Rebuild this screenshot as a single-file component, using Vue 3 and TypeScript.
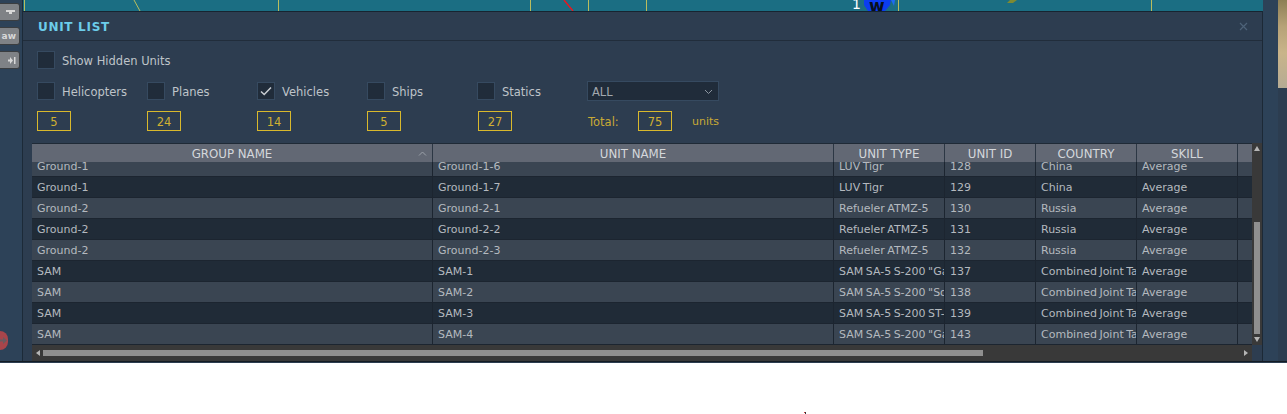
<script setup lang="ts">
interface Filter { label: string; count: number; checked: boolean }
const filters: Filter[] = [
  { label: 'Helicopters', count: 5, checked: false },
  { label: 'Planes', count: 24, checked: false },
  { label: 'Vehicles', count: 14, checked: true },
  { label: 'Ships', count: 5, checked: false },
  { label: 'Statics', count: 27, checked: false },
]
const columns = ['GROUP NAME', 'UNIT NAME', 'UNIT TYPE', 'UNIT ID', 'COUNTRY', 'SKILL']
const rows: string[][] = [
  ['Ground-1', 'Ground-1-6', 'LUV Tigr', '128', 'China', 'Average'],
  ['Ground-1', 'Ground-1-7', 'LUV Tigr', '129', 'China', 'Average'],
  ['Ground-2', 'Ground-2-1', 'Refueler ATMZ-5', '130', 'Russia', 'Average'],
  ['Ground-2', 'Ground-2-2', 'Refueler ATMZ-5', '131', 'Russia', 'Average'],
  ['Ground-2', 'Ground-2-3', 'Refueler ATMZ-5', '132', 'Russia', 'Average'],
  ['SAM', 'SAM-1', 'SAM SA-5 S-200 "Gammon"', '137', 'Combined Joint Task Forces', 'Average'],
  ['SAM', 'SAM-2', 'SAM SA-5 S-200 "Square Pair"', '138', 'Combined Joint Task Forces', 'Average'],
  ['SAM', 'SAM-3', 'SAM SA-5 S-200 ST-68', '139', 'Combined Joint Task Forces', 'Average'],
  ['SAM', 'SAM-4', 'SAM SA-5 S-200 "Gammon"', '143', 'Combined Joint Task Forces', 'Average'],
]
</script>

<template>
  <div class="screen">
    <div class="app">
      <aside class="rail">
        <div class="railbtn">
          <svg width="10" height="6" viewBox="0 0 10 6"><path d="M0 1h9v2H6v2H3V3H0z" fill="#d8d8d8" /></svg>
        </div>
        <div class="railbtn"><span class="glyph">aw</span></div>
        <div class="railbtn">
          <svg width="8" height="7" viewBox="0 0 8 7"><path d="M0 2.5h2V0l3 3.5L2 7V4.5H0zM6 0h1.5v7H6z" fill="#d8d8d8" /></svg>
        </div>
        <div class="railspacer"></div>
        <div class="redbtn">
          <svg width="8" height="19" viewBox="0 0 8 19"><path d="M0 8.5h3V6l4 3.5L3 13v-2.5H0z" fill="#6a5a60" /></svg>
        </div>
      </aside>

      <main class="main">
        <svg class="map" width="1240" height="11" viewBox="0 0 1240 11">
          <g stroke="#b9bd5e" stroke-width="1" fill="none">
            <path d="M1.5 0v11M255.5 0v11M507.5 0v11M565.5 0v11M623.5 0v11M875.5 0v11M1128.5 0v11" />
            <path d="M111 0l6 11" />
          </g>
          <path d="M541 0l9 11" stroke="#f0141c" stroke-width="1.4" fill="none" />
          <path d="M841 0h27l-1 5-5 6h-17l-4-6z" fill="#0b3df0" />
          <path d="M868 0l3 6 1-6z" fill="#1e6cf2" />
          <path d="M984 3l3-3h7l-4 3z" fill="#7e8a32" />
        </svg>
        <span class="mapnum">1</span>
        <span class="mapw">w</span>

        <section class="panel">
          <header class="head">
            <h1 class="title">UNIT LIST</h1>
            <svg class="close" width="9" height="9" viewBox="0 0 9 9"><path d="M1 1l7 7M8 1l-7 7" stroke="#4d6278" stroke-width="1.2" /></svg>
          </header>

          <div class="body">
            <label class="check hidden-row">
              <span class="box"></span>
              <span class="lbl">Show Hidden Units</span>
            </label>

            <div class="filters">
              <label v-for="f in filters" :key="f.label" class="check cell">
                <span class="box">
                  <svg v-if="f.checked" width="14" height="12" viewBox="0 0 14 12"><path d="M2 6.5l3.2 3L12 2.5" stroke="#c9ced3" stroke-width="1.5" fill="none" /></svg>
                </span>
                <span class="lbl">{{ f.label }}</span>
              </label>
              <div class="select">
                <span>ALL</span>
                <svg width="9" height="6" viewBox="0 0 9 6"><path d="M1 1l3.5 3.5L8 1" stroke="#8c96a0" stroke-width="1" fill="none" /></svg>
              </div>
            </div>

            <div class="counts">
              <div v-for="f in filters" :key="f.label" class="cell countcell">
                <span class="count">{{ f.count }}</span>
              </div>
              <div class="total">
                <span class="totlbl">Total:</span>
                <span class="count">75</span>
                <span class="units">units</span>
              </div>
            </div>
          </div>

          <div class="grid">
            <div class="gridmain">
              <div class="tablearea">
                <div class="thead">
                  <div v-for="c in columns" :key="c" class="th">{{ c }}<svg v-if="c === 'GROUP NAME'" class="sort" width="9" height="5" viewBox="0 0 9 5"><path d="M1 4.5L4.5 1 8 4.5" stroke="#9aa0a8" fill="none" /></svg></div>
                  <div class="th fill"></div>
                </div>
                <div class="tbody">
                  <div class="rowlist">
                    <div v-for="(r, i) in rows" :key="r[1]" class="tr" :class="i % 2 === 0 ? 'odd' : 'even'">
                      <div v-for="(v, j) in r" :key="j" class="td">{{ v }}</div>
                      <div class="td fill"></div>
                    </div>
                  </div>
                </div>
              </div>
              <div class="vbar">
                <span class="arrow-up"></span>
                <span class="vtrack"><span class="vthumb"></span></span>
                <span class="arrow-down"></span>
              </div>
            </div>
            <div class="hbar">
              <span class="arrow-left"></span>
              <span class="htrack"><span class="hthumb"></span></span>
              <span class="arrow-right"></span>
            </div>
          </div>
        </section>
      </main>

      <div class="strip"></div>
      <div class="thumb"></div>
    </div>
    <div class="edge"></div>
    <div class="page">
      <svg class="tick" width="4" height="3" viewBox="0 0 4 3"><rect x="0" y="1" width="1" height="1" fill="#d8333a" /><rect x="1" y="1" width="1" height="2" fill="#333" /></svg>
    </div>
  </div>
</template>

<style>
html, body { margin: 0; background: #fff; }
</style>

<style scoped>
.screen { width: 1287px; height: 414px; overflow: hidden; font-family: "DejaVu Sans", sans-serif; font-size: 11.5px; color: #bfc4c9; background: #fff; display: flex; flex-direction: column; }
.app { display: flex; height: 361px; background: #2c3d50; flex: none; border-bottom: 1px solid #141c24; box-sizing: content-box; }
.edge { height: 1px; flex: none; background: #2c3d50; }
.rail { width: 23px; flex: none; box-sizing: border-box; border-right: 1px solid #1c2a38; display: flex; flex-direction: column; gap: 6px; padding-top: 3px; background: #2d4258; }
.railbtn { width: 20px; height: 18px; flex: none; box-sizing: border-box; background: #7f8286; border: 1px solid #3a3d40; border-left: 0; border-radius: 0 3px 3px 0; display: flex; align-items: center; justify-content: flex-end; padding-right: 3px; overflow: hidden; color: #d8d8d8; font-size: 9px; font-weight: 700; }
.glyph { white-space: nowrap; }
.railspacer { flex: 1; }
.redbtn { width: 8px; height: 19px; border-radius: 0 10px 10px 0; background: #a8454b; margin-bottom: 11px; overflow: hidden; flex: none; }
.redbtn svg { display: block; }
.main { width: 1240px; flex: none; position: relative; display: flex; flex-direction: column; }
.map { display: block; flex: none; background: #1b6e83; height: 11px; }
.mapnum { position: absolute; left: 829px; top: -4px; color: #fff; font-size: 14px; line-height: 16px; }
.mapw { position: absolute; left: 846px; top: 0; color: #08101c; font-size: 17px; font-weight: 700; line-height: 12px; }
.panel { flex: 1; display: flex; flex-direction: column; border-top: 1px solid #172430; background: #2d3d50; border-right: 1px solid #1c2936; min-height: 0; position: relative; }
.head { height: 29px; flex: none; box-sizing: border-box; border-bottom: 1px solid #212d3b; display: flex; align-items: center; justify-content: space-between; padding: 1px 14px 0 15px; }
.title { margin: 0; font-size: 12px; font-weight: 700; color: #6ccdea; letter-spacing: .7px; line-height: 16px; }
.close { display: block; }
.body { flex: none; padding: 10px 0 0 14px; height: 102px; box-sizing: border-box; }
.check { display: flex; align-items: center; gap: 7px; }
.box { width: 18px; height: 18px; box-sizing: border-box; background: #202c3a; border: 1px solid #364a60; display: flex; align-items: center; justify-content: center; flex: none; }
.lbl { line-height: 18px; white-space: nowrap; padding-top: 2px; }
.hidden-row { height: 18px; }
.filters { display: flex; align-items: flex-start; margin-top: 12px; height: 18px; }
.cell { width: 110px; flex: none; }
.select { width: 132px; height: 20px; flex: none; box-sizing: border-box; background: #202c3a; border: 1px solid #364a60; display: flex; align-items: center; justify-content: space-between; padding: 1px 5px 0 4px; color: #a2a8ae; }
.counts { display: flex; margin-top: 12px; height: 20px; align-items: flex-start; }
.count { width: 34px; height: 20px; box-sizing: border-box; border: 1px solid #d9b92c; color: #d1b032; display: flex; align-items: center; justify-content: center; line-height: 18px; padding-top: 1px; flex: none; }
.countcell:nth-child(5) { padding-left: 1px; box-sizing: border-box; }
.total { display: flex; align-items: center; height: 20px; color: #c9aa35; }
.totlbl { width: 51px; padding-left: 1px; padding-top: 1px; box-sizing: border-box; }
.units { margin-left: 20px; font-size: 11px; padding-top: 1px; }
.grid { margin: 0 0 0 9px; width: 1230px; flex: 1; min-height: 0; display: flex; flex-direction: column; }
.gridmain { display: flex; flex: none; height: 202px; }
.tablearea { width: 1220px; flex: none; display: flex; flex-direction: column; min-width: 0; border-top: 1px solid #1f2a36; box-sizing: border-box; }
.thead { display: flex; height: 18px; flex: none; background: #626874; position: relative; z-index: 1; }
.th { text-align: center; line-height: 20px; font-size: 11.8px; color: #d4d7db; border-right: 1px solid #2c3744; box-sizing: border-box; position: relative; white-space: nowrap; overflow: hidden; }
.sort { position: absolute; right: 5px; top: 7px; }
.tbody { flex: 1; overflow: hidden; min-height: 0; }
.rowlist { margin-top: -6px; }
.tr { display: flex; height: 21px; box-sizing: border-box; border-bottom: 1px solid #1c2530; }
.odd { background: #3a4552; }
.even { background: #202b37; }
.td { line-height: 20px; padding: 1px 0 0 5px; box-sizing: border-box; border-right: 1px solid #1c2530; overflow: hidden; white-space: nowrap; color: #b4b9bf; font-size: 11px; word-spacing: -1px; }
.th:nth-child(1), .td:nth-child(1) { width: 401px; flex: none; }
.th:nth-child(2), .td:nth-child(2) { width: 401px; flex: none; }
.th:nth-child(3), .td:nth-child(3) { width: 111px; flex: none; }
.th:nth-child(4), .td:nth-child(4) { width: 91px; flex: none; }
.th:nth-child(5), .td:nth-child(5) { width: 101px; flex: none; }
.th:nth-child(6), .td:nth-child(6) { width: 101px; flex: none; }
.fill { flex: 1; border-right: 0; }
.vbar { width: 10px; flex: none; background: #393939; display: flex; flex-direction: column; align-items: center; box-sizing: border-box; padding: 3px 0 3px; }
.arrow-up { width: 0; height: 0; border: 3.5px solid transparent; border-top: 0; border-bottom: 5px solid #b5b5b5; }
.arrow-down { width: 0; height: 0; border: 3.5px solid transparent; border-bottom: 0; border-top: 5px solid #b5b5b5; }
.vtrack { flex: 1; width: 6px; display: flex; flex-direction: column; justify-content: flex-end; padding-bottom: 3px; }
.vthumb { display: block; height: 112px; background: #8f8f8f; }
.hbar { width: 1220px; height: 16px; box-sizing: border-box; flex: none; background: #393939; display: flex; align-items: center; padding: 0 4px; gap: 3px; }
.arrow-left { width: 0; height: 0; border: 3.5px solid transparent; border-left: 0; border-right: 4px solid #b5b5b5; flex: none; }
.arrow-right { width: 0; height: 0; border: 3.5px solid transparent; border-right: 0; border-left: 4px solid #b5b5b5; flex: none; }
.htrack { flex: 1; height: 6px; display: block; }
.hthumb { display: block; width: 940px; height: 6px; background: #8f8f8f; }
.strip { width: 15px; flex: none; background: #2d4258; }
.thumb { width: 9px; height: 88px; flex: none; background: linear-gradient(180deg, #8d7f55 0%, #b6a277 30%, #c9b48a 60%, #b5ab94 100%); }
.page { flex: 1; position: relative; }
.tick { position: absolute; left: 804px; top: 48px; display: block; }
</style>
